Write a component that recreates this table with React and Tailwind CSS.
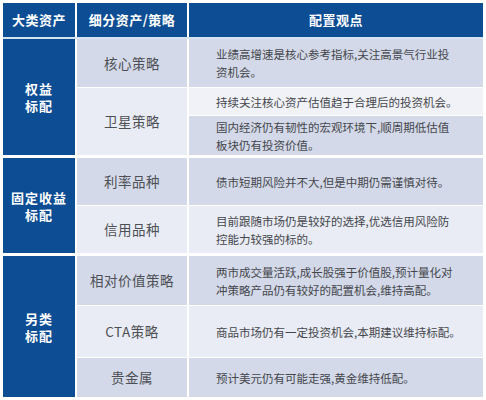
const dark = "bg-[#d3d9e8]";
const light = "bg-[#e9ecf4]";
const lightest = "bg-[#f1f2f7]";

const Side = ({ lines, span }) => (
  <div className={`${span} bg-[#0c4d93] flex flex-col items-center justify-center text-white font-bold text-[13px] leading-[17px] tracking-[1px]`}>
    {lines.map((l) => (
      <div key={l}>{l}</div>
    ))}
  </div>
);

const Sub = ({ text, bg, span = "" }) => (
  <div className={`${span} ${bg} flex items-center justify-center text-[13.5px] text-[#4d4f55] tracking-[0.5px]`}>
    {text}
  </div>
);

const View = ({ lines, bg }) => (
  <div className={`${bg} flex flex-col justify-center pl-[27px] text-[11.5px] leading-[18px] text-[#45474d] whitespace-nowrap`}>
    {lines.map((l) => (
      <div key={l}>{l}</div>
    ))}
  </div>
);

export default function App() {
  return (
    <div className="w-[486px] h-[400px] bg-white pt-[3px] pl-[3px] font-['Noto_Sans_CJK_SC','Noto_Sans',sans-serif]">
      <div className="w-[480px] flex flex-col">
        {/* header */}
        <div className="grid grid-cols-[72px_110px_294px] gap-x-[2px] h-[34px] bg-white">
          <div className="bg-[#0c4d93] flex items-center justify-center text-white font-bold text-[13px] tracking-[0.5px]">大类资产</div>
          <div className="bg-[#0c4d93] flex items-center justify-center text-white font-bold text-[13px] tracking-[0.5px]">细分资产/策略</div>
          <div className="bg-[#0c4d93] flex items-center justify-center text-white font-bold text-[13px] tracking-[0.5px]">配置观点</div>
        </div>
        <div className="h-[2px] bg-[#d5e3f1]" />

        {/* 权益标配 */}
        <div className="grid grid-cols-[72px_110px_294px] grid-rows-[48px_27px_39px] gap-x-[2px] gap-y-px bg-white">
          <Side lines={["权益", "标配"]} span="row-span-3" />
          <Sub text="核心策略" bg={dark} />
          <View bg={dark} lines={["业绩高增速是核心参考指标,关注高景气行业投", "资机会。"]} />
          <Sub text="卫星策略" bg={light} span="row-span-2" />
          <View bg={lightest} lines={["持续关注核心资产估值趋于合理后的投资机会。"]} />
          <View bg={dark} lines={["国内经济仍有韧性的宏观环境下,顺周期低估值", "板块仍有投资价值。"]} />
        </div>
        <div className="h-[3px]" />

        {/* 固定收益标配 */}
        <div className="grid grid-cols-[72px_110px_294px] grid-rows-[47px_47px] gap-x-[2px] gap-y-px bg-white">
          <Side lines={["固定收益", "标配"]} span="row-span-2" />
          <Sub text="利率品种" bg={dark} />
          <View bg={dark} lines={["债市短期风险并不大,但是中期仍需谨慎对待。"]} />
          <Sub text="信用品种" bg={light} />
          <View bg={light} lines={["目前跟随市场仍是较好的选择,优选信用风险防", "控能力较强的标的。"]} />
        </div>
        <div className="h-[3px]" />

        {/* 另类标配 */}
        <div className="grid grid-cols-[72px_110px_294px] grid-rows-[49px_51px_39px] gap-x-[2px] gap-y-px bg-white">
          <Side lines={["另类", "标配"]} span="row-span-3" />
          <Sub text="相对价值策略" bg={dark} />
          <View bg={dark} lines={["两市成交量活跃,成长股强于价值股,预计量化对", "冲策略产品仍有较好的配置机会,维持高配。"]} />
          <Sub text="CTA策略" bg={light} />
          <View bg={light} lines={["商品市场仍有一定投资机会,本期建议维持标配。"]} />
          <Sub text="贵金属" bg={dark} />
          <View bg={dark} lines={["预计美元仍有可能走强,黄金维持低配。"]} />
        </div>
      </div>
    </div>
  );
}
